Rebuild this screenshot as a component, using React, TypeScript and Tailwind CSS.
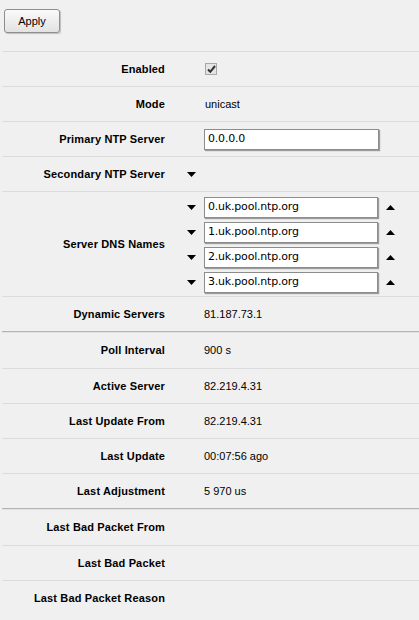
import React from 'react'

const labelFont = { fontFamily: '"Liberation Sans", Arial, sans-serif' }
const inputFont = { fontFamily: '"DejaVu Sans", Verdana, sans-serif' }

function DownArrow() {
  return (
    <svg width="9" height="5" viewBox="0 0 9 5" className="block">
      <polygon points="0,0 9,0 4.5,5" fill="#000" />
    </svg>
  )
}

function UpArrow() {
  return (
    <svg width="9" height="5" viewBox="0 0 9 5" className="block">
      <polygon points="4.5,0 9,5 0,5" fill="#000" />
    </svg>
  )
}

function TextBox({ value, width }: { value: string; width: string }) {
  return (
    <div
      className={`${width} h-[21px] bg-white border border-[#8c8c8c] shadow-[1px_1px_1px_rgba(0,0,0,0.35)] flex items-center pl-[3px] text-[11px] tracking-[-0.2px] text-black`}
      style={inputFont}
    >
      {value}
    </div>
  )
}

function Row({
  label,
  children,
  arrow,
  thick,
}: {
  label: string
  children?: React.ReactNode
  arrow?: boolean
  thick?: boolean
}) {
  return (
    <div className="ml-[2px]">
      {thick ? (
        <>
          <div className="h-px bg-[#b4b4b4]" />
          <div className="h-px bg-[#e2e2e2]" />
        </>
      ) : (
        <div className="h-px bg-[#dcdcdc]" />
      )}
      <div className={`flex items-center ${thick ? 'h-[35px]' : 'h-[34px]'}`}>
        <div
          className="w-[163px] text-right text-[11px] font-bold tracking-[0.15px] text-black"
          style={labelFont}
        >
          {label}
        </div>
        {arrow ? (
          <div className="w-[39px] flex justify-end pr-[8px]">
            <DownArrow />
          </div>
        ) : (
          <div className="w-[39px]" />
        )}
        <div className="flex-1 text-[11px] text-black" style={labelFont}>
          {children}
        </div>
      </div>
    </div>
  )
}

const dnsNames = ['0.uk.pool.ntp.org', '1.uk.pool.ntp.org', '2.uk.pool.ntp.org', '3.uk.pool.ntp.org']

export default function App() {
  return (
    <div className="w-[419px] min-h-[620px] bg-[#f0f0f0] overflow-hidden">
      {/* toolbar */}
      <div className="h-[51px] pt-[7px] pl-[4px]">
        <button
          type="button"
          className="w-[56px] h-[24px] rounded-[3px] border border-[#8e8e8e] bg-gradient-to-b from-[#fafafa] to-[#e2e2e2] shadow-[1px_1px_1px_rgba(0,0,0,0.2)] text-[11px] text-black"
          style={labelFont}
        >
          Apply
        </button>
      </div>

      <Row label="Enabled">
        <div className="ml-[1px] w-[12px] h-[12px] border border-[#a8a8a8] bg-[#e4e4e4] flex items-center justify-center">
          <svg width="9" height="8" viewBox="0 0 9 8">
            <path d="M1 4.5 L3.3 6.8 L8 1" stroke="#333" strokeWidth="2" fill="none" />
          </svg>
        </div>
      </Row>
      <Row label="Mode">
        <span className="ml-[1px]">unicast</span>
      </Row>
      <Row label="Primary NTP Server">
        <TextBox value="0.0.0.0" width="w-[175px]" />
      </Row>
      <Row label="Secondary NTP Server" arrow />

      {/* server dns names */}
      <div className="ml-[2px]">
        <div className="h-px bg-[#dcdcdc]" />
        <div className="flex items-center h-[104px]">
          <div
            className="w-[163px] text-right text-[11px] font-bold tracking-[0.15px] text-black"
            style={labelFont}
          >
            Server DNS Names
          </div>
          <div className="flex flex-col gap-[4px] pt-[1px]">
            {dnsNames.map((name) => (
              <div key={name} className="flex items-center">
                <div className="w-[39px] flex justify-end pr-[8px]">
                  <DownArrow />
                </div>
                <TextBox value={name} width="w-[174px]" />
                <div className="ml-[8px]">
                  <UpArrow />
                </div>
              </div>
            ))}
          </div>
        </div>
      </div>

      <Row label="Dynamic Servers">81.187.73.1</Row>
      <Row label="Poll Interval" thick>
        900 s
      </Row>
      <Row label="Active Server">82.219.4.31</Row>
      <Row label="Last Update From">82.219.4.31</Row>
      <Row label="Last Update">00:07:56 ago</Row>
      <Row label="Last Adjustment">5 970 us</Row>
      <Row label="Last Bad Packet From" thick />
      <Row label="Last Bad Packet" />
      <Row label="Last Bad Packet Reason" />
    </div>
  )
}
